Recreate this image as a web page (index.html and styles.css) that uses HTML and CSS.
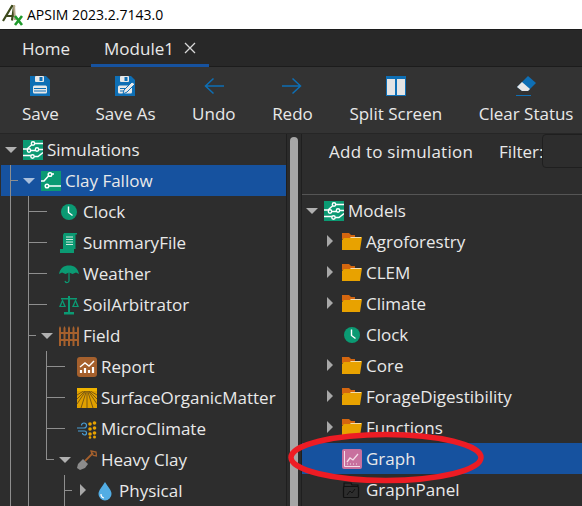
FILE: index.html
```html
<!DOCTYPE html>
<html lang="en">
<head>
  <meta charset="UTF-8">
  <meta name="viewport" content="width=device-width,initial-scale=1.0">
  <title>APSIM 2023.2.7143.0</title>
  <link rel="stylesheet" href="styles.css">
</head>
<body>

  <!-- shared icons -->
  <svg class="defs" width="0" height="0">
    <symbol id="i-sims" viewBox="0 0 20 20">
      <rect width="20" height="20" fill="#0b9a73"/>
      <g fill="none" stroke="#fff" stroke-width="1.400">
        <circle cx="10" cy="3.500" r="1.700"/><circle cx="6" cy="10.500" r="1.700"/><circle cx="14" cy="9.500" r="1.700"/><circle cx="9.500" cy="16.500" r="1.700"/>
        <path d="M8.700 4.700 4 9H0M11.700 3.500H20M7.700 10.500h4.600M15.700 9.500H20M11.200 16.500H15l5-4M0 15.500h7.800"/>
      </g>
    </symbol>
    <symbol id="i-sim" viewBox="0 0 20 20">
      <rect width="20" height="20" fill="#0b9a73"/>
      <g fill="none" stroke="#fff" stroke-width="1.500">
        <circle cx="9" cy="3.500" r="1.800"/><circle cx="6" cy="15" r="1.800"/>
        <path d="M7.700 4.800 3 10H0M10.800 3h2.200M7.800 15H20"/>
      </g>
    </symbol>
    <symbol id="i-clock" viewBox="0 0 20 20">
      <circle cx="10" cy="10" r="8" fill="#0b9a73"/>
      <path d="M9.500 4.500v6l4 3" fill="none" stroke="#fff" stroke-width="1.400"/>
    </symbol>
    <symbol id="i-folder" viewBox="0 0 20 20">
      <path d="M0 1h7l2 2h4v4H0z" fill="#d4660f"/>
      <path d="M0 18V8l2-2h6l1-1h11l-2 13z" fill="#e8a200"/>
      <path d="M8.500 5.500h10.500" fill="none" stroke="#f3dcae" stroke-width="1"/>
    </symbol>
  </svg>

  <header class="title-bar">
    <svg class="app-logo" width="22" height="24" viewBox="0 0 22 24">
      <path d="M1 18 10 3l2 .5-2 14M4 13h9" fill="none" stroke="#3d4a1c" stroke-width="2.200"/>
      <path d="M12 2l1 15" stroke="#b5a98c" stroke-width="2"/>
      <path d="M13 13l7 9M20 13l-7 9" stroke="#1f9a2c" stroke-width="2.600"/>
    </svg>
    <span>APSIM 2023.2.7143.0</span>
  </header>

  <nav class="tabs">
    <div class="tab">Home</div>
    <div class="tab tab-active">Module1 <span class="tab-close">
      <svg width="12" height="12" viewBox="0 0 12 12"><path d="M1 1l10 10M11 1 1 11" stroke="#d8d8d8" stroke-width="1.300"/></svg>
    </span></div>
  </nav>

  <div class="toolbar">
    <div class="tool">
      <svg width="20" height="20" viewBox="0 0 20 20"><path d="M0 0h16l4 4v16H0z" fill="#0e6fb5"/><rect x="5" y="0" width="9" height="6" rx="1" fill="#e8e8e8"/><rect x="9.500" y="1" width="3" height="4" fill="#0e6fb5"/><rect x="3" y="9.500" width="14" height="8" rx="1.500" fill="#e8e8e8"/><path d="M4 12.500h12M4 15h12" stroke="#0e6fb5"/></svg>
      Save
    </div>
    <div class="tool">
      <svg width="20" height="20" viewBox="0 0 20 20"><path d="M0 0h16l4 4v16H0z" fill="#0e6fb5"/><rect x="5" y="0" width="9" height="6" rx="1" fill="#e8e8e8"/><rect x="9.500" y="1" width="3" height="4" fill="#0e6fb5"/><rect x="3" y="9.500" width="14" height="8" rx="1.500" fill="#e8e8e8"/><path d="M5 12.500h6M5 15h4" stroke="#0e6fb5"/><path d="M8 18l1-4 8-8 3 2-8 8z" fill="#e8e8e8" stroke="#0e6fb5"/></svg>
      Save As
    </div>
    <div class="tool">
      <svg width="20" height="20" viewBox="0 0 20 20"><path d="M20 10H1.500M9.500 2.500 1.500 10l8 7.500" fill="none" stroke="#0e6fb5" stroke-width="1.500"/></svg>
      Undo
    </div>
    <div class="tool">
      <svg width="20" height="20" viewBox="0 0 20 20"><path d="M0 10h18.500M10.500 2.500l8 7.500-8 7.500" fill="none" stroke="#0e6fb5" stroke-width="1.500"/></svg>
      Redo
    </div>
    <div class="tool">
      <svg width="20" height="20" viewBox="0 0 20 20"><rect width="20" height="20" fill="#0e6fb5"/><rect x="1" y="3" width="8" height="16" fill="#e4e4e4"/><rect x="11" y="3" width="8" height="16" fill="#e4e4e4"/></svg>
      Split Screen
    </div>
    <div class="tool">
      <svg width="20" height="20" viewBox="0 0 20 20"><path d="M12 0l8 7-8 8H6L1 11z" fill="#0e6fb5"/><path d="M6 6l8 7-2 2H6l-5-4z" fill="#e8e8e8"/><path d="M0 19.500h15" stroke="#0e6fb5"/></svg>
      Clear Status
    </div>
  </div>

  <main class="panes">
    <section class="pane-left">
      <div class="tree">
        <div class="row">
          <span class="cell arrow-down"></span>
          <svg class="icon"><use href="#i-sims"/></svg>Simulations
        </div>
        <div class="row selected">
          <span class="cell line stub"></span><span class="cell arrow-down"></span>
          <svg class="icon"><use href="#i-sim"/></svg>Clay Fallow
        </div>
        <div class="row">
          <span class="cell line"></span><span class="cell line tee"></span><span class="cell tail"></span>
          <svg class="icon"><use href="#i-clock"/></svg>Clock
        </div>
        <div class="row">
          <span class="cell line"></span><span class="cell line tee"></span><span class="cell tail"></span>
          <svg class="icon" viewBox="0 0 20 20"><path d="M5 0h13v1.500h-1.500V16H4V2z" fill="#0b9a73"/><path d="M1 16h14v4H1z" fill="#0b9a73"/><path d="M7 4h7M7 6.500h7M7 9h7M7 11.500h7" stroke="#cfe9df"/></svg>SummaryFile
        </div>
        <div class="row">
          <span class="cell line"></span><span class="cell line tee"></span><span class="cell tail"></span>
          <svg class="icon" viewBox="0 0 20 20"><path d="M0 10C1 4 5 1.500 10 1.500S19 4 20 10l-3-1.500L13.500 10 10 8.500 6.500 10 3 8.500z" fill="#0b9a73"/><path d="M10 2v14a2 2 0 0 1-4 1" fill="none" stroke="#0b9a73" stroke-width="1.200"/></svg>Weather
        </div>
        <div class="row">
          <span class="cell line"></span><span class="cell line tee"></span><span class="cell tail"></span>
          <svg class="icon" viewBox="0 0 20 20"><path d="M9 1h2v16H9zM5 17h10v2.500H5zM2 3h16v1.500H2z" fill="#0b9a73"/><path d="M0 12h7L3.500 4zM13 12h7l-3.500-8z" fill="#0b9a73"/><path d="M2 11 3.500 7 5 11zM15 11l1.500-4 1.500 4z" fill="#2d2d2d"/></svg>SoilArbitrator
        </div>
        <div class="row">
          <span class="cell line"></span><span class="cell line tee short"></span><span class="cell arrow-down"></span>
          <svg class="icon" viewBox="0 0 20 20"><path d="M0 2 1 0l1 2v18H0zM4.500 2l1-2 1 2v18h-2zM9 2l1-2 1 2v18H9zM13.500 2l1-2 1 2v18h-2zM18 2l1-2 1 2v18h-2z" fill="#a5602d"/><path d="M0 6h20v2H0zM0 13h20v2H0z" fill="#a5602d"/></svg>Field
        </div>
        <div class="row">
          <span class="cell line"></span><span class="cell line"></span><span class="cell line tee"></span><span class="cell tail"></span>
          <svg class="icon" viewBox="0 0 20 20"><rect width="20" height="20" rx="3" fill="#a5602d"/><path d="M4 16v-3M8 16v-5M12 16v-3M16 16v-6" stroke="#fff" stroke-width="2.200"/><path d="M3 10l5-4 4 3 5-5" fill="none" stroke="#fff" stroke-width="1.400"/></svg>Report
        </div>
        <div class="row">
          <span class="cell line"></span><span class="cell line"></span><span class="cell line tee"></span><span class="cell tail"></span>
          <svg class="icon" viewBox="0 0 20 20"><rect width="20" height="20" fill="#e0a000"/><path d="M0 7 10 1M0 11 10 1M0 16 10 1M4 20 10 1M10 20V1M16 20 10 1M20 16 10 1M20 11 10 1M20 7 10 1" stroke="#7d5a10" stroke-width="1"/><rect width="20" height="3" fill="#f0b400"/></svg>SurfaceOrganicMatter
        </div>
        <div class="row">
          <span class="cell line"></span><span class="cell line"></span><span class="cell line tee"></span><span class="cell tail"></span>
          <svg class="icon" viewBox="0 0 20 20"><path d="M0 9h7a2.500 2.500 0 1 0-2.500-2.500M1 12h6.500a2 2 0 1 1-2 2" fill="none" stroke="#4a9fd6" stroke-width="1.200"/><g fill="#e6a100"><circle cx="13" cy="5" r="1.800"/><circle cx="17.500" cy="4" r="1.800"/><circle cx="13" cy="10" r="1.800"/><circle cx="17.500" cy="9" r="1.800"/><circle cx="13" cy="15" r="1.800"/><circle cx="17.500" cy="14" r="1.800"/><circle cx="17.500" cy="18" r="1.500"/><circle cx="13" cy="18.500" r="1.300"/></g></svg>MicroClimate
        </div>
        <div class="row">
          <span class="cell line"></span><span class="cell line"></span><span class="cell line elbow short"></span><span class="cell arrow-down"></span>
          <svg class="icon" viewBox="0 0 20 20"><path d="M8 11 16 3" stroke="#a5602d" stroke-width="1.800"/><path d="M14 1l5 1 .5 4-3-.5-1.500-1.500z" fill="none" stroke="#a5602d" stroke-width="1.300"/><path d="M1 14l5-5 5 5-3 4-5 2-3-2z" fill="#8c8c8c"/></svg>Heavy Clay
        </div>
        <div class="row">
          <span class="cell line"></span><span class="cell line"></span><span class="cell"></span><span class="cell line tee short"></span><span class="cell arrow-right"></span>
          <svg class="icon" viewBox="0 0 20 20"><path d="M10 1c3 5 6.500 8 6.500 12a6.500 6.500 0 0 1-13 0C3.500 9 7 6 10 1z" fill="#52ade4"/><path d="M6 13a4 4 0 0 0 3 4" fill="none" stroke="#fff" stroke-width="1.200"/></svg>Physical
        </div>
      </div>
    </section>

    <div class="scrollbar"><div class="thumb"></div></div>

    <section class="pane-right">
      <div class="add-bar">
        <span class="add-title">Add to simulation</span>
        <span class="filter-label">Filter:</span>
        <div class="filter-input"></div>
      </div>
      <div class="tree tree-models">
        <div class="row"><span class="cell arrow-down"></span><svg class="icon"><use href="#i-sims"/></svg>Models</div>
        <div class="row"><span class="cell"></span><span class="cell arrow-right"></span><svg class="icon"><use href="#i-folder"/></svg>Agroforestry</div>
        <div class="row"><span class="cell"></span><span class="cell arrow-right"></span><svg class="icon"><use href="#i-folder"/></svg>CLEM</div>
        <div class="row"><span class="cell"></span><span class="cell arrow-right"></span><svg class="icon"><use href="#i-folder"/></svg>Climate</div>
        <div class="row"><span class="cell"></span><span class="cell"></span><svg class="icon"><use href="#i-clock"/></svg>Clock</div>
        <div class="row"><span class="cell"></span><span class="cell arrow-right"></span><svg class="icon"><use href="#i-folder"/></svg>Core</div>
        <div class="row"><span class="cell"></span><span class="cell arrow-right"></span><svg class="icon"><use href="#i-folder"/></svg>ForageDigestibility</div>
        <div class="row"><span class="cell"></span><span class="cell arrow-right"></span><svg class="icon"><use href="#i-folder"/></svg>Functions</div>
        <div class="row selected"><span class="cell"></span><span class="cell"></span>
          <svg class="icon" viewBox="0 0 20 20"><rect width="20" height="20" rx="2" fill="#c8709e"/><path d="M2.500 2v15.500H18" fill="none" stroke="#f4dce8"/><path d="M5 13l3-4 3 2 5-6" fill="none" stroke="#f4dce8" stroke-width="1.300"/><path d="M5 15h11" stroke="#f4dce8" stroke-dasharray="1 2"/></svg>Graph
        </div>
        <div class="row"><span class="cell"></span><span class="cell"></span>
          <svg class="icon" viewBox="0 0 20 20"><path d="M2 7V3h7l1 2h6v2M2.500 6.500h13a1 1 0 0 1 1 1v9a1 1 0 0 1-1 1h-13a1 1 0 0 1-1-1v-9a1 1 0 0 1 1-1z" fill="none" stroke="#111" stroke-width="1.200"/><path d="M5 15l3-4 2 2 3-4" fill="none" stroke="#111"/></svg>GraphPanel
        </div>
      </div>
    </section>
  </main>

  <svg class="highlight" width="202" height="58" viewBox="0 0 202 58">
    <ellipse cx="99" cy="27.500" rx="95" ry="23" fill="none" stroke="#ed1c24" stroke-width="5.500"/>
  </svg>

</body>
</html>
```

FILE: styles.css
```css
* {
  box-sizing: border-box;
}

html, body {
  height: 100%;
}

body {
  position: relative;
  margin: 0;
  display: flex;
  flex-direction: column;
  overflow: hidden;
  background-color: #2d2d2d;
  color: #e9e9e9;
  font-family: "Open Sans", "Noto Sans", sans-serif;
  font-size: 17px;
}

.defs {
  position: absolute;
}

.title-bar {
  flex: none;
  height: 29px;
  display: flex;
  align-items: center;
  gap: 3px;
  padding-left: 2px;
  background-color: #fff;
  color: #000;
  font-size: 14px;
}

.tabs {
  flex: none;
  height: 38px;
  display: flex;
  padding-left: 1px;
  border-top: 1px solid #1c1c1c;
  border-bottom: 1px solid #1c1c1c;
  background-color: #282828;
}

.tab {
  display: flex;
  align-items: center;
  gap: 10px;
  padding: 0 21px;
}

.tab-active {
  padding: 2px 13px 0;
  border-bottom: 3px solid #16529f;
  margin-bottom: -1px;
}

.tab-close {
  display: flex;
}

.toolbar {
  flex: none;
  height: 66px;
  display: flex;
  gap: 36.600px;
  padding: 9px 0 0 22px;
  background-color: #333;
}

.tool {
  display: flex;
  flex-direction: column;
  align-items: center;
  gap: 6px;
  white-space: nowrap;
}

.panes {
  flex: 1;
  display: flex;
  min-height: 0;
  border-top: 1px solid #262626;
}

.pane-left {
  flex: none;
  width: 287px;
  border-right: 1px solid #1f1f1f;
  overflow: hidden;
}

.scrollbar {
  flex: none;
  width: 15px;
  padding: 3px 3px 0;
  border-right: 1px solid #1f1f1f;
  background-color: #2b2b2b;
}

.thumb {
  height: 100%;
  border-radius: 4px 4px 0 0;
  background-color: #a6a6a6;
}

.pane-right {
  flex: 1;
  min-width: 0;
  overflow: hidden;
}

.add-bar {
  height: 61px;
  display: flex;
  align-items: flex-start;
  padding-left: 27px;
  white-space: nowrap;
  border-bottom: 1px solid #555;
}

.add-title {
  margin-top: 6px;
  letter-spacing: 0.24px;
}

.filter-label {
  margin: 6px 0 0 26px;
}

.filter-input {
  flex: none;
  width: 60px;
  height: 34px;
  margin-left: -1px;
  border: 1px solid #1f1f1f;
  border-radius: 4px;
}

/* tree rows, one cell per depth level */
.tree {
  padding-left: 1px;
}

.tree-models {
  padding-left: 0;
}

.row {
  height: 31px;
  display: flex;
  align-items: center;
  padding-left: 1px;
  white-space: nowrap;
}

.selected {
  background-color: #16529f;
}

.cell {
  flex: none;
  position: relative;
  width: 18px;
  height: 31px;
}

.icon {
  flex: none;
  width: 20px;
  height: 20px;
  margin: 0 4px 0 3px;
}

.line::before {
  content: "";
  position: absolute;
  left: 8px;
  top: 0;
  bottom: 0;
  border-left: 1px solid #8e8e8e;
}

.tee::after, .elbow::after, .stub::after {
  content: "";
  position: absolute;
  left: 8px;
  right: 0;
  top: 15px;
  border-top: 1px solid #8e8e8e;
}

.stub::after, .short::after {
  right: 2px;
}

.elbow::before {
  bottom: 15px;
}

.tail::before {
  content: "";
  position: absolute;
  left: 0;
  width: 9px;
  top: 15px;
  border-top: 1px solid #8e8e8e;
}

.arrow-down::before {
  content: "";
  position: absolute;
  left: 3px;
  top: 13px;
  border-style: solid;
  border-width: 6px 6px 0;
  border-color: #b0b0b0 transparent transparent;
}

.selected .arrow-down::before {
  border-top-color: #a9bfdc;
}

.arrow-right::before {
  content: "";
  position: absolute;
  left: 6px;
  top: 9px;
  border-style: solid;
  border-width: 6px 0 6px 6px;
  border-color: transparent transparent transparent #a8a8a8;
}

.highlight {
  position: absolute;
  left: 287px;
  top: 430px;
}
```
